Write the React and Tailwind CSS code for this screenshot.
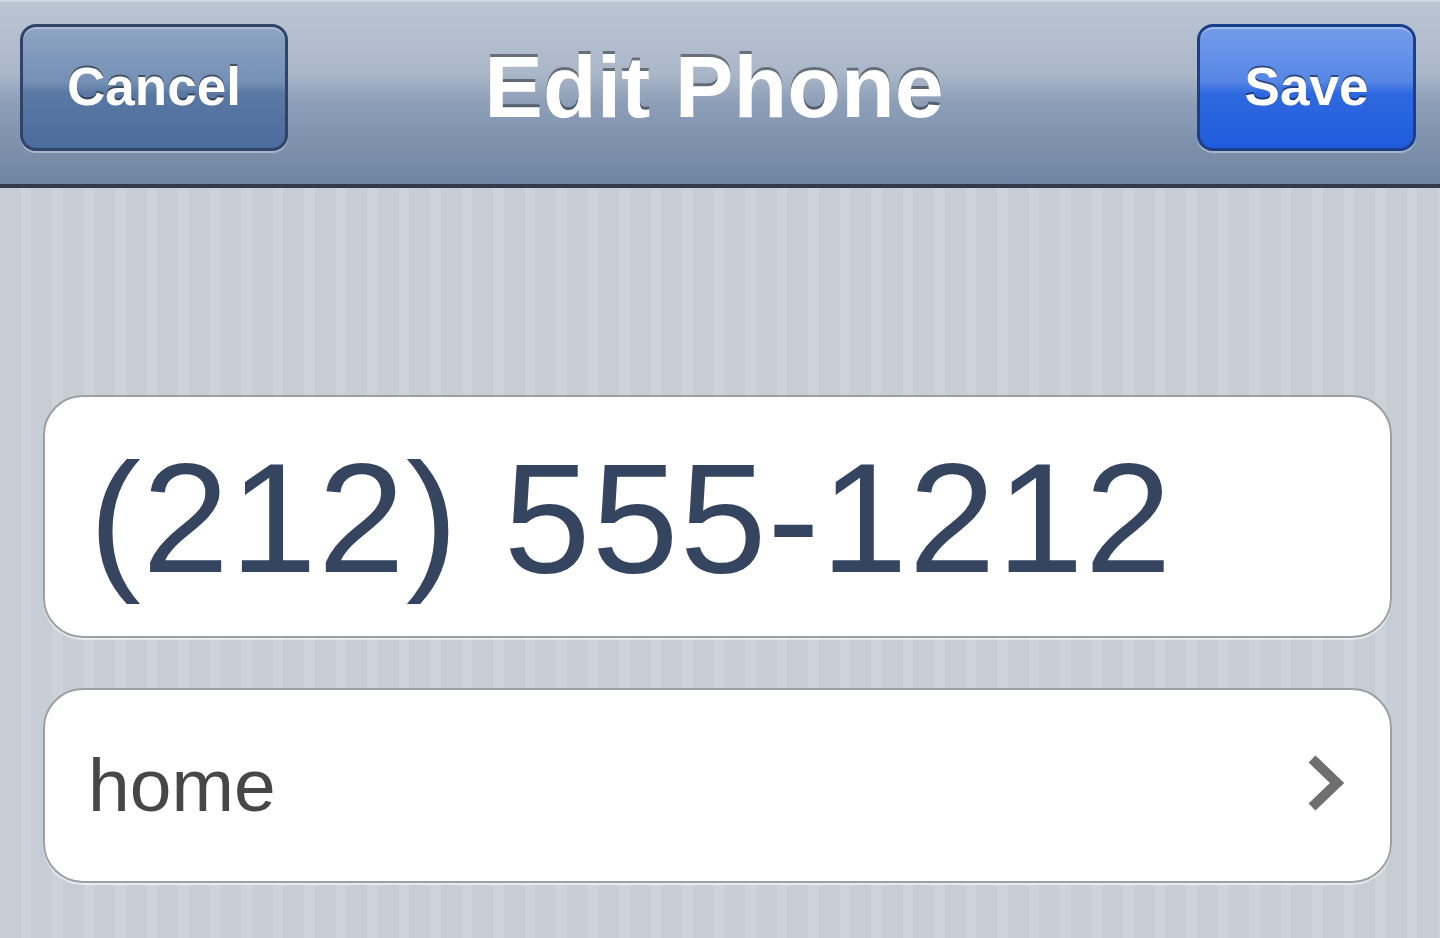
export default function App() {
  return (
    <div
      className="w-[1440px] h-[938px] overflow-hidden flex flex-col bg-[repeating-linear-gradient(90deg,#c6cdd5_0px,#c6cdd5_21px,#ccd3da_21px,#ccd3da_31.5px)]"
      style={{ fontFamily: '"Liberation Sans", Arial, Helvetica, sans-serif' }}
    >
      {/* Navigation bar */}
      <div className="relative h-[188px] shrink-0 flex items-center justify-between pl-[20px] pr-[24px] pb-[10px] bg-[linear-gradient(180deg,#bcc6d4_0%,#aab7c9_40%,#8e9fb8_55%,#6f85a3_100%)] border-b-[4px] border-[#2f3a4b] shadow-[inset_0_2px_0_#d0d8e2]">
        <button className="w-[268px] h-[127px] rounded-[16px] border-[3px] border-[#2f4468] bg-[linear-gradient(180deg,#8ea4c3_0%,#7590b5_45%,#5a78a3_55%,#4b6c9c_100%)] shadow-[inset_0_2px_0_rgba(255,255,255,0.25),0_2px_0_rgba(255,255,255,0.35)] flex items-center justify-center text-white font-bold text-[53px] [text-shadow:0_-2px_0_rgba(0,0,0,0.45)]">
          Cancel
        </button>
        <div className="absolute left-0 right-0 top-0 bottom-[10px] flex items-center justify-center pointer-events-none">
          <span className="text-white font-bold text-[88px] leading-none translate-x-[-6px] [text-shadow:0_-3px_0_rgba(0,0,0,0.4)]">
            Edit Phone
          </span>
        </div>
        <button className="w-[219px] h-[127px] rounded-[16px] border-[3px] border-[#1c3f8a] bg-[linear-gradient(180deg,#759cea_0%,#5586e6_45%,#2f69e0_55%,#1f5cdc_100%)] shadow-[inset_0_2px_0_rgba(255,255,255,0.3),0_2px_0_rgba(255,255,255,0.35)] flex items-center justify-center text-white font-bold text-[53px] [text-shadow:0_-2px_0_rgba(0,0,0,0.45)]">
          Save
        </button>
      </div>

      {/* Form fields */}
      <div className="flex flex-col gap-[50px] pl-[43px] pr-[48px] pt-[207px]">
        <div className="h-[243px] rounded-[40px] bg-white border-[2px] border-[#9c9fa4] shadow-[0_2px_0_rgba(255,255,255,0.6)] flex items-center pl-[44px]">
          <span className="text-[156px] leading-none text-[#36455f] tracking-[1.2px] translate-y-[1px]">
            (212) 555-1212
          </span>
        </div>
        <div className="h-[195px] rounded-[40px] bg-white border-[2px] border-[#9c9fa4] shadow-[0_2px_0_rgba(255,255,255,0.6)] flex items-center justify-between pl-[43px] pr-[44px]">
          <span className="text-[75px] leading-none text-[#474747]">home</span>
          <svg width="40" height="60" viewBox="0 0 40 60" className="translate-y-[-3px]">
            <polyline
              points="6,6 31,30 6,54"
              fill="none"
              stroke="#6f6f6f"
              strokeWidth="10"
              strokeLinejoin="miter"
            />
          </svg>
        </div>
      </div>
    </div>
  );
}
